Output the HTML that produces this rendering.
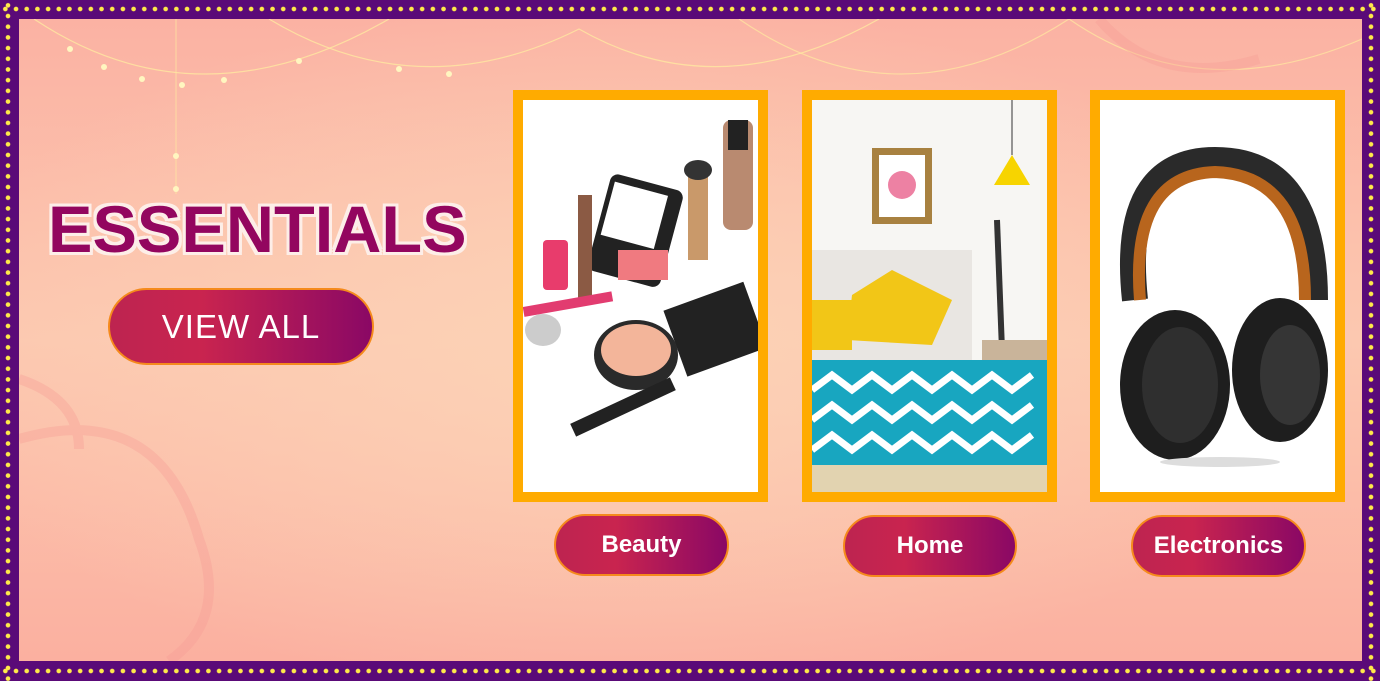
<!DOCTYPE html>
<html><head><meta charset="utf-8"><style>
*{margin:0;padding:0;box-sizing:border-box}
body{width:1380px;height:681px;overflow:hidden;font-family:"Liberation Sans",sans-serif;background:#5a0a78;position:relative}
.frame{position:absolute;left:0;top:0;width:1380px;height:681px;background:#5a0a78}
.dots{position:absolute;background-image:radial-gradient(circle,#ffe94a 0 2px,transparent 2.6px);}
.inner{position:absolute;left:19px;top:19px;width:1343px;height:642px;
background:radial-gradient(ellipse 700px 350px at 600px 330px,#fcd2b6 0%,rgba(252,200,175,0) 100%),linear-gradient(180deg,#fbb2a3 0%,#fcc8b0 50%,#fbb0a0 100%);overflow:hidden}
.title{position:absolute;left:29px;top:172px;font-size:66px;font-weight:900;color:#93065f;
text-shadow:3px 3px 0 #fdeee8,-3px -3px 0 #fdeee8,3px -3px 0 #fdeee8,-3px 3px 0 #fdeee8,0 3px 0 #fdeee8,0 -3px 0 #fdeee8,3px 0 0 #fdeee8,-3px 0 0 #fdeee8;transform:scaleX(1.01);transform-origin:left}
.btn{position:absolute;border:2px solid #f58a1c;border-radius:40px;background:linear-gradient(90deg,#bd2450 0%,#c9244f 35%,#8a0865 100%);color:#fff;font-weight:bold;display:flex;align-items:center;justify-content:center}
.card{position:absolute;top:90px;width:255px;height:412px;background:#ffab00;padding:10px}
.card .in{width:100%;height:100%;background:#fff;position:relative;overflow:hidden}
</style></head><body>
<div class="frame"></div>
<div class="dots" style="left:0;top:4px;width:1380px;height:10px;background-size:10.7px 10px"></div>
<div class="dots" style="left:0;top:666px;width:1380px;height:10px;background-size:10.7px 10px"></div>
<div class="dots" style="left:3px;top:0;width:10px;height:681px;background-size:10px 10.7px"></div>
<div class="dots" style="left:1366px;top:0;width:10px;height:681px;background-size:10px 10.7px"></div>
<div class="inner">
<svg width="1343" height="642" style="position:absolute;left:0;top:0" fill="none">
<path d="M15 0 Q180 110 370 0" stroke="#ffe9a0" stroke-width="1.2" opacity=".8"/>
<path d="M250 0 Q400 90 560 10 Q700 90 860 0" stroke="#ffe9a0" stroke-width="1.2" opacity=".8"/>
<path d="M720 0 Q880 110 1050 0 Q1180 90 1343 20" stroke="#ffe9a0" stroke-width="1.2" opacity=".7"/>
<line x1="157" y1="0" x2="157" y2="175" stroke="#ffe9a0" opacity=".7"/>
<g fill="#fff6c0"><circle cx="51" cy="30" r="3"/><circle cx="85" cy="48" r="3"/><circle cx="123" cy="60" r="3"/><circle cx="163" cy="66" r="3"/><circle cx="205" cy="61" r="3"/><circle cx="280" cy="42" r="3"/><circle cx="380" cy="50" r="3"/><circle cx="430" cy="55" r="3"/><circle cx="157" cy="137" r="3"/><circle cx="157" cy="170" r="3"/></g>
<g stroke="#f79c94" stroke-width="10" opacity=".35"><path d="M0 360 Q60 380 60 430"/><path d="M0 420 Q140 380 180 520 Q210 600 150 642"/><path d="M1080 0 Q1140 70 1240 40"/></g>
</svg>
<div class="title">ESSENTIALS</div>
</div>
<div class="btn" style="left:108px;top:288px;width:266px;height:77px;font-size:33px;font-weight:normal;letter-spacing:1px">VIEW ALL</div>

<div class="card" style="left:513px"><div class="in">
<svg width="235" height="392">
<rect x="75" y="80" width="75" height="100" rx="8" fill="#222" transform="rotate(15 110 130)"/>
<rect x="80" y="88" width="55" height="55" fill="#fff" transform="rotate(15 110 130)"/>
<rect x="95" y="150" width="50" height="30" fill="#f07a80"/>
<rect x="200" y="20" width="30" height="110" rx="8" fill="#b98a70"/><rect x="205" y="20" width="20" height="30" fill="#222"/>
<rect x="165" y="70" width="20" height="90" fill="#c9996a"/><ellipse cx="175" cy="70" rx="14" ry="10" fill="#333"/>
<rect x="55" y="95" width="14" height="110" fill="#8b5a44"/>
<rect x="20" y="140" width="25" height="50" rx="4" fill="#e83c6c"/>
<rect x="150" y="195" width="85" height="70" fill="#222" transform="rotate(-20 190 230)"/>
<ellipse cx="113" cy="255" rx="42" ry="35" fill="#2a2a2a"/><ellipse cx="113" cy="250" rx="35" ry="26" fill="#f3b59a"/>
<ellipse cx="20" cy="230" rx="18" ry="16" fill="#ccc"/>
<rect x="45" y="300" width="110" height="14" fill="#222" transform="rotate(-25 100 307)"/>
<rect x="0" y="200" width="90" height="10" fill="#e23c70" transform="rotate(-10 40 205)"/>
</svg></div></div>

<div class="card" style="left:802px"><div class="in" style="background:#f7f6f3">
<svg width="235" height="392">
<rect x="60" y="48" width="60" height="76" fill="#a88140"/><rect x="67" y="55" width="46" height="62" fill="#fff"/><circle cx="90" cy="85" r="14" fill="#e64b7c" opacity=".7"/>
<path d="M200 0 V55" stroke="#333"/><path d="M182 85 L200 55 L218 85Z" fill="#f7d400"/>
<rect x="0" y="150" width="160" height="110" fill="#e9e6e2"/>
<path d="M40 195 L80 170 L140 200 L120 245 L35 240Z" fill="#f2c617"/>
<rect x="0" y="200" width="40" height="50" fill="#f2c617"/>
<path d="M185 120 L190 250" stroke="#333" stroke-width="6"/>
<rect x="170" y="240" width="65" height="110" fill="#c9b49a"/>
<rect x="0" y="260" width="235" height="105" fill="#18a6c0"/>
<path d="M0 290 l20 -15 l20 15 l20 -15 l20 15 l20 -15 l20 15 l20 -15 l20 15 l20 -15 l20 15 l20 -15 M0 320 l20 -15 l20 15 l20 -15 l20 15 l20 -15 l20 15 l20 -15 l20 15 l20 -15 l20 15 l20 -15 M0 350 l20 -15 l20 15 l20 -15 l20 15 l20 -15 l20 15 l20 -15 l20 15 l20 -15 l20 15 l20 -15" stroke="#fff" stroke-width="7" fill="none"/>
<rect x="0" y="365" width="235" height="27" fill="#e2d3b0"/>
</svg></div></div>

<div class="card" style="left:1090px"><div class="in">
<svg width="235" height="392">
<path d="M35 200 Q20 60 115 60 Q215 60 215 200" stroke="#2a2a2a" stroke-width="26" fill="none"/>
<path d="M40 200 Q30 75 115 72 Q205 75 205 200" stroke="#b8651d" stroke-width="12" fill="none"/>
<ellipse cx="75" cy="285" rx="55" ry="75" fill="#1e1e1e"/><ellipse cx="80" cy="285" rx="38" ry="58" fill="#2f2f2f"/>
<ellipse cx="180" cy="270" rx="48" ry="72" fill="#1e1e1e"/><ellipse cx="190" cy="275" rx="30" ry="50" fill="#353535"/>
<ellipse cx="120" cy="362" rx="60" ry="5" fill="#ddd"/>
</svg></div></div>

<div class="btn" style="left:554px;top:514px;width:175px;height:62px;font-size:24px">Beauty</div>
<div class="btn" style="left:843px;top:515px;width:174px;height:62px;font-size:24px">Home</div>
<div class="btn" style="left:1131px;top:515px;width:175px;height:62px;font-size:24px">Electronics</div>
</body></html>
